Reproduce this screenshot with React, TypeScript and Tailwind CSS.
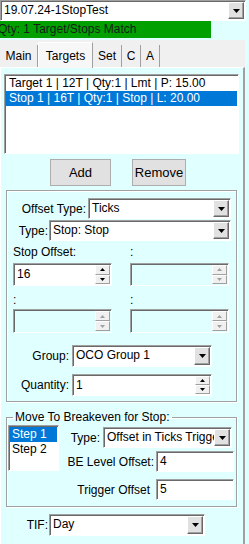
import React from "react";

const font = { fontFamily: '"Liberation Sans", Arial, sans-serif' };

function Arrow({ up = false, disabled = false, small = false }: { up?: boolean; disabled?: boolean; small?: boolean }) {
  const c = disabled ? "#a0a0a0" : "#000";
  if (small) {
    return (
      <svg width="5" height="3" viewBox="0 0 5 3">
        <path d={up ? "M0 3h5L2.5 0z" : "M0 0h5L2.5 3z"} fill={c} />
      </svg>
    );
  }
  return (
    <svg width="7" height="4" viewBox="0 0 7 4">
      <path d="M0 0h7L3.5 4z" fill={c} />
    </svg>
  );
}

function DropButton() {
  return (
    <div className="flex h-full w-[16px] items-center justify-center border border-t-white border-l-white border-b-[#696969] border-r-[#696969] bg-[#e1e1e1] shadow-[inset_-1px_-1px_0_#a0a0a0]">
      <Arrow />
    </div>
  );
}

function Combo({ text, className }: { text: string; className: string }) {
  return (
    <div className={`flex items-stretch border border-t-[#a0a0a0] border-l-[#a0a0a0] border-b-white border-r-white bg-white p-[1px] shadow-[inset_1px_1px_0_#696969] ${className}`}>
      <div className="flex-1 overflow-hidden whitespace-nowrap pl-[2px] leading-[17px]">{text}</div>
      <DropButton />
    </div>
  );
}

function SpinBox({ text = "", disabled = false, className }: { text?: string; disabled?: boolean; className: string }) {
  const btn = "flex flex-1 items-center justify-center border border-t-white border-l-white border-b-[#a0a0a0] border-r-[#a0a0a0] bg-[#f0f0f0]";
  return (
    <div className={`flex items-stretch border border-t-[#a0a0a0] border-l-[#a0a0a0] border-b-white border-r-white p-[1px] shadow-[inset_1px_1px_0_#696969] ${disabled ? "bg-[#e0ffff]" : "bg-white"} ${className}`}>
      <div className="flex-1 overflow-hidden pl-[2px] leading-[19px]">{text}</div>
      <div className="flex w-[15px] flex-col">
        <div className={btn}>
          <Arrow up small disabled={disabled} />
        </div>
        <div className={btn}>
          <Arrow small disabled={disabled} />
        </div>
      </div>
    </div>
  );
}

function TextBox({ text, className }: { text: string; className: string }) {
  return (
    <div className={`border border-t-[#a0a0a0] border-l-[#a0a0a0] border-b-white border-r-white bg-white pl-[3px] leading-[19px] shadow-[inset_1px_1px_0_#696969] ${className}`}>
      {text}
    </div>
  );
}

export default function App() {
  return (
    <div className="h-[544px] w-[249px] overflow-hidden bg-[#e0ffff] text-[12px] text-black" style={font}>
      {/* order selector */}
      <Combo text="19.07.24-1StopTest" className="h-[21px] w-[246px]" />
      <div className="h-[17px] w-[211px] overflow-hidden whitespace-nowrap bg-[#00a000] pl-0 leading-[17px] text-[#1a1a1a]">
        <span className="-ml-[2px] inline-block">Qty: 1 Target/Stops Match</span>
      </div>

      {/* tabs */}
      <div className="mt-[2px] flex h-[27px] w-[245px] items-end bg-[#f0f0f0]">
        <div className="flex h-[22px] w-[38px] items-center justify-center border-r border-[#a0a0a0]">Main</div>
        <div className="-mb-[1px] flex h-[26px] w-[55px] items-start justify-center border-x border-t border-t-white border-l-white border-r-[#a0a0a0] bg-[#f7f7f7] pt-[4px]">Targets</div>
        <div className="flex h-[22px] w-[29px] items-center justify-center border-r border-[#a0a0a0]">Set</div>
        <div className="flex h-[22px] w-[19px] items-center justify-center border-r border-[#a0a0a0]">C</div>
        <div className="flex h-[22px] w-[19px] items-center justify-center border-r border-[#a0a0a0]">A</div>
      </div>

      {/* tab page */}
      <div className="flex h-[477px] w-[245px] flex-col border-l border-r-2 border-t border-l-white border-r-[#a0a0a0] border-t-white">
        {/* list of targets/stops */}
        <div className="ml-[3px] mt-[6px] h-[80px] w-[235px] border border-t-[#a0a0a0] border-l-[#a0a0a0] border-b-white border-r-white bg-white p-[1px] shadow-[inset_1px_1px_0_#696969]">
          <div className="h-[15px] whitespace-nowrap pl-[3px] leading-[15px]">Target 1 | 12T | Qty:1 | Lmt | P: 15.00</div>
          <div className="h-[15px] whitespace-nowrap bg-[#0078d7] pl-[3px] leading-[15px] text-white">Stop 1 | 16T | Qty:1 | Stop | L: 20.00</div>
        </div>

        <div className="mt-[5px] flex h-[27px] items-stretch">
          <button className="ml-[49px] w-[61px] border border-[#adadad] bg-[#e1e1e1] text-[13px]">Add</button>
          <button className="ml-[21px] w-[54px] border border-[#adadad] bg-[#e1e1e1] text-[13px]">Remove</button>
        </div>

        {/* stop settings */}
        <div className="ml-[5px] mt-[4px] flex h-[212px] w-[231px] flex-col border border-[#a0a0a0] shadow-[inset_1px_1px_0_#fff,1px_1px_0_#fff]">
          <div className="mt-[7px] flex h-[21px] items-center">
            <div className="w-[79px] text-right">Offset Type:</div>
            <Combo text="Ticks" className="ml-[2px] h-[21px] w-[143px]" />
          </div>
          <div className="mt-[1px] flex h-[21px] items-center">
            <div className="w-[41px] text-right">Type:</div>
            <Combo text="Stop: Stop" className="ml-[1px] h-[21px] w-[182px]" />
          </div>
          <div className="mt-[4px] flex h-[14px] items-center leading-[14px]">
            <div className="ml-[6px] w-[117px]">Stop Offset:</div>
            <div>:</div>
          </div>
          <div className="mt-[4px] flex h-[23px]">
            <SpinBox text="16" className="ml-[6px] w-[99px]" />
            <SpinBox disabled className="ml-[18px] w-[99px]" />
          </div>
          <div className="mt-[7px] flex h-[14px] items-center leading-[14px]">
            <div className="ml-[6px] w-[117px]">:</div>
            <div>:</div>
          </div>
          <div className="mt-[2px] flex h-[24px]">
            <SpinBox disabled className="ml-[6px] w-[99px]" />
            <SpinBox disabled className="ml-[18px] w-[99px]" />
          </div>
          <div className="mt-[11px] flex h-[23px] items-center">
            <div className="w-[62px] text-right">Group:</div>
            <Combo text="OCO Group 1" className="ml-[3px] h-[22px] w-[140px]" />
          </div>
          <div className="mt-[7px] flex h-[22px] items-center">
            <div className="w-[62px] text-right">Quantity:</div>
            <SpinBox text="1" className="ml-[3px] h-[22px] w-[140px]" />
          </div>
        </div>

        {/* breakeven */}
        <fieldset className="ml-[5px] mt-[8px] h-[97px] w-[231px] border border-[#a0a0a0] shadow-[inset_1px_1px_0_#fff,1px_1px_0_#fff]">
          <legend className="ml-[6px] px-[2px] leading-[14px]">Move To Breakeven for Stop:</legend>
          <div className="mt-[1px] flex">
            <div className="ml-[1px] h-[46px] w-[51px] border border-t-[#a0a0a0] border-l-[#a0a0a0] border-b-white border-r-white bg-white p-[1px] shadow-[inset_1px_1px_0_#696969]">
              <div className="h-[15px] bg-[#0078d7] pl-[2px] leading-[15px] text-white">Step 1</div>
              <div className="h-[15px] pl-[2px] leading-[15px]">Step 2</div>
            </div>
            <div className="flex flex-1 flex-col">
              <div className="mt-[2px] flex h-[21px] items-center justify-end pr-[4px]">
                <div>Type:</div>
                <Combo text="Offset in Ticks Trigger" className="ml-[3px] h-[21px] w-[129px]" />
              </div>
              <div className="mt-[3px] flex h-[21px] items-center justify-end pr-[2px]">
                <div>BE Level Offset:</div>
                <TextBox text="4" className="ml-[2px] h-[21px] w-[78px]" />
              </div>
              <div className="mt-[7px] flex h-[21px] items-center justify-end pr-[2px]">
                <div>Trigger Offset</div>
                <TextBox text="5" className="ml-[6px] h-[21px] w-[78px]" />
              </div>
            </div>
          </div>
        </fieldset>

        <div className="mt-[7px] flex h-[22px] items-center">
          <div className="w-[47px] text-right">TIF:</div>
          <Combo text="Day" className="ml-[1px] h-[22px] w-[156px]" />
        </div>
      </div>
    </div>
  );
}
